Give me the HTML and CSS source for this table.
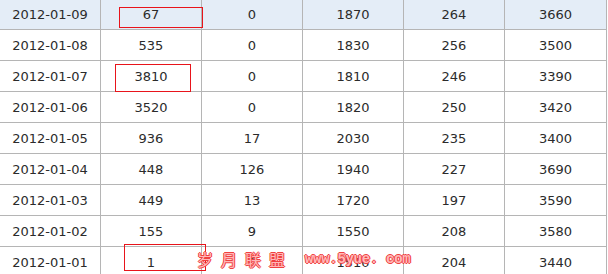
FILE: index.html
```html
<!DOCTYPE html>
<html lang="zh-CN">
<head>
    <meta charset="UTF-8">
    <title>每日统计</title>
    <link rel="stylesheet" href="styles.css">
</head>
<body>
    <div class="page">
        <table class="stats">
            <tbody>
                <tr class="current"><td>2012-01-09</td><td>67</td><td>0</td><td>1870</td><td>264</td><td>3660</td></tr>
                <tr><td>2012-01-08</td><td>535</td><td>0</td><td>1830</td><td>256</td><td>3500</td></tr>
                <tr><td>2012-01-07</td><td>3810</td><td>0</td><td>1810</td><td>246</td><td>3390</td></tr>
                <tr><td>2012-01-06</td><td>3520</td><td>0</td><td>1820</td><td>250</td><td>3420</td></tr>
                <tr><td>2012-01-05</td><td>936</td><td>17</td><td>2030</td><td>235</td><td>3400</td></tr>
                <tr><td>2012-01-04</td><td>448</td><td>126</td><td>1940</td><td>227</td><td>3690</td></tr>
                <tr><td>2012-01-03</td><td>449</td><td>13</td><td>1720</td><td>197</td><td>3590</td></tr>
                <tr><td>2012-01-02</td><td>155</td><td>9</td><td>1550</td><td>208</td><td>3580</td></tr>
                <tr><td>2012-01-01</td><td>1</td><td>0</td><td>1510</td><td>204</td><td>3440</td></tr>
            </tbody>
        </table>

        <!-- red marks drawn over the table -->
        <div class="mark markOne"></div>
        <div class="mark markTwo"></div>
        <div class="mark markThree"></div>

        <div class="watermark">
            <span class="wmName">岁月联盟</span>
            <span class="wmSite">www.5yue. com</span>
        </div>
    </div>
</body>
</html>
```

FILE: styles.css
```css
* {
  box-sizing: border-box;
  margin: 0;
  padding: 0;
}

html, body {
  width: 608px;
  height: 274px;
  overflow: hidden;
  background-color: #FFFFFF;
}

body {
  font-family: "DejaVu Sans", Verdana, sans-serif;
  font-size: 13px;
  color: #2B2B2B;
}

.page {
  position: relative;
  width: 608px;
  height: 274px;
}

.stats {
  border-collapse: collapse;
  table-layout: fixed;
  width: 608px;
  margin-left: -1px;
  margin-top: -2px;
}

.stats td {
  width: 101px;
  height: 31px;
  border: 1px solid #B5B5B5;
  text-align: center;
  vertical-align: middle;
  padding: 0;
}

.stats td:last-child {
  width: 102px;
}

.stats tr.current td {
  background-color: #E4EDF7;
}

.mark {
  position: absolute;
  border: 1px solid #E8141B;
}

.markOne {
  left: 119px;
  top: 9px;
  width: 84px;
  height: 21px;
}

.markTwo {
  left: 115px;
  top: 66px;
  width: 76px;
  height: 28px;
}

.markThree {
  left: 124px;
  top: 246px;
  width: 82px;
  height: 27px;
}

.watermark {
  position: absolute;
  left: 197px;
  top: 251px;
  display: flex;
  align-items: flex-end;
  gap: 12px;
  color: #FFB8B8;
  text-shadow: 1px 0 0 #F04040, -1px 0 0 #F04040, 0 1px 0 #F04040, 0 -1px 0 #F04040;
}

.wmName {
  font-family: "Noto Sans CJK SC", sans-serif;
  font-size: 16px;
  letter-spacing: 8px;
  line-height: 20px;
}

.wmSite {
  font-family: "Liberation Mono", monospace;
  font-weight: bold;
  font-size: 14px;
  line-height: 19px;
  letter-spacing: -0.3px;
}
```
